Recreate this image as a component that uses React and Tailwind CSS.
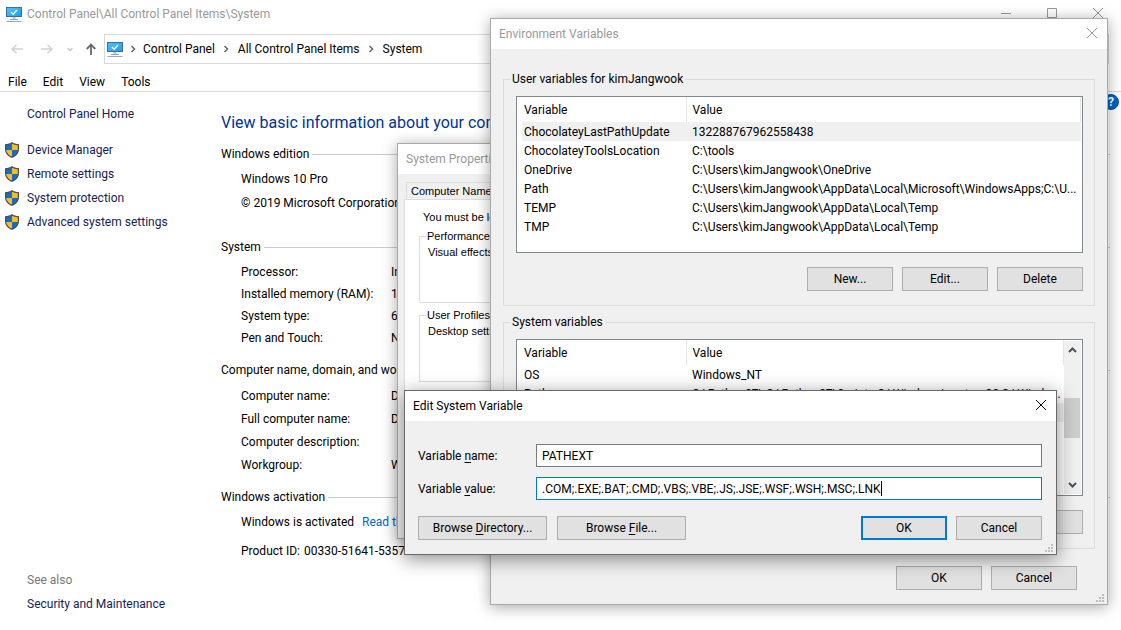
import React from "react";

function MonitorIcon() {
  return (
    <svg className="size-4 shrink-0" viewBox="0 0 16 16" aria-hidden="true">
      <defs>
        <linearGradient id="screen" x1="0" y1="0" x2="1" y2="1">
          <stop offset="0" stopColor="#4fc3fa" />
          <stop offset="1" stopColor="#1e9bf0" />
        </linearGradient>
      </defs>
      <rect x="0.5" y="1.5" width="15" height="9" fill="url(#screen)" stroke="#3f6f93" />
      <path d="M5 6l2.200 2.200L11 4" fill="none" stroke="#fff" strokeWidth="1.500" />
      <path d="M6.500 11h3v2h-3z" fill="#b9c6d0" />
      <path d="M4 13h8v1H4z" fill="#8ba6ba" />
      <path d="M0.500 15h15v1h-15z" fill="#93aabb" />
    </svg>
  );
}

function ShieldIcon() {
  return (
    <svg className="h-4 w-[14px] shrink-0" viewBox="0 0 14 16" aria-hidden="true">
      <path d="M7 0C5.300 1.400 2.800 2.200 0 2.200V7c0 4.200 2.800 7.200 7 9 4.200-1.800 7-4.800 7-9V2.200C11.200 2.200 8.700 1.400 7 0z" fill="#4a4a4a" />
      <path d="M7 1.600C5.400 2.700 3.400 3.200 1.200 3.300V8H7z" fill="#0f6fc6" />
      <path d="M7 1.600C8.600 2.700 10.600 3.200 12.800 3.300V8H7z" fill="#fdb92c" />
      <path d="M1.200 8C1.500 11 3.700 13.200 7 14.700V8z" fill="#fdb92c" />
      <path d="M12.800 8C12.500 11 10.300 13.200 7 14.700V8z" fill="#0f6fc6" />
    </svg>
  );
}

function Chevron() {
  return (
    <svg className="size-2 shrink-0" viewBox="0 0 8 8" aria-hidden="true">
      <path d="M2.500 1l3 3-3 3" fill="none" stroke="#666" strokeWidth="1.500" />
    </svg>
  );
}

function CloseGlyph() {
  return (
    <svg className="size-[10px]" viewBox="0 0 10 10" aria-hidden="true">
      <path d="M0 0l10 10M10 0L0 10" fill="none" stroke="currentColor" />
    </svg>
  );
}

function Grip() {
  return (
    <svg className="absolute bottom-[2px] right-[3px] size-2" viewBox="0 0 8 8" aria-hidden="true">
      <path
        d="M6 0h2v2H6zM3 3h2v2H3zM6 3h2v2H6zM0 6h2v2H0zM3 6h2v2H3zM6 6h2v2H6z"
        fill="#bfbfbf"
      />
    </svg>
  );
}

function Button({ children, wide, primary }) {
  return (
    <button
      type="button"
      className={
        "h-6 shrink-0 bg-[#e1e1e1] text-center leading-5 " +
        (wide ? "w-[129px] " : "w-[86px] ") +
        (primary ? "border-2 border-[#0078d7]" : "border border-[#adadad]")
      }
    >
      {children}
    </button>
  );
}

function TitleBar({ title, active }) {
  return (
    <header
      className={
        "flex h-[30px] items-center justify-between bg-white pl-2 " +
        (active ? "text-black" : "text-[#999]")
      }
    >
      <h2>{title}</h2>
      <button type="button" aria-label="Close" className="flex h-[28px] w-[30px] items-center justify-center self-start">
        <CloseGlyph />
      </button>
    </header>
  );
}

function Section({ title, className, children }) {
  return (
    <section className={"mr-[9px] " + className}>
      <div className="flex h-5 items-center gap-[3px]">
        <h2>{title}</h2>
        <span className="h-px flex-1 bg-[#ccc]" />
      </div>
      {children}
    </section>
  );
}

function Facts({ rows, rowClass }) {
  return (
    <dl className="pl-5 pt-1">
      {rows.map(([k, v]) => (
        <div key={k} className={"flex items-center " + rowClass}>
          <dt className="w-[150px] shrink-0">{k}</dt>
          <dd>{v}</dd>
        </div>
      ))}
    </dl>
  );
}

const TASKS = ["Device Manager", "Remote settings", "System protection", "Advanced system settings"];

function SystemWindow() {
  return (
    <div className="flex min-h-screen flex-col bg-white">
      <header className="flex h-7 items-center gap-[5px] pl-[6px] text-[#999]">
        <MonitorIcon />
        <span className="flex-1">Control Panel\All Control Panel Items\System</span>
        <div className="flex self-start">
          <button type="button" aria-label="Minimize" className="flex h-[26px] w-[46px] items-center justify-center">
            <svg className="size-[10px]" viewBox="0 0 10 10"><path d="M0 5h10v1H0z" fill="currentColor" /></svg>
          </button>
          <button type="button" aria-label="Maximize" className="flex h-[26px] w-[46px] items-center justify-center">
            <svg className="size-[10px]" viewBox="0 0 10 10"><path d="M.5.5h9v9h-9z" fill="none" stroke="currentColor" /></svg>
          </button>
          <button type="button" aria-label="Close" className="flex h-[26px] w-[46px] items-center justify-center">
            <CloseGlyph />
          </button>
        </div>
      </header>

      <nav className="mt-[6px] flex h-[30px] items-center pl-[11px] pr-3" aria-label="Address">
        <button type="button" aria-label="Back" className="w-[30px]">
          <svg className="h-[10px] w-3" viewBox="0 0 12 10"><path d="M12 5H1M5.500 .7L1.200 5l4.300 4.300" fill="none" stroke="#d2d2d2" strokeWidth="1.600" /></svg>
        </button>
        <button type="button" aria-label="Forward" className="w-[26px]">
          <svg className="h-[10px] w-3" viewBox="0 0 12 10"><path d="M0 5h11M6.500 .7L10.800 5 6.500 9.300" fill="none" stroke="#d2d2d2" strokeWidth="1.600" /></svg>
        </button>
        <button type="button" aria-label="Recent locations" className="w-[19px]">
          <svg className="h-[5px] w-[6px]" viewBox="0 0 6 5"><path d="M.5 1L3 3.500 5.500 1" fill="none" stroke="#c4c4c4" strokeWidth="1.400" /></svg>
        </button>
        <button type="button" aria-label="Up" className="w-[18px]">
          <svg className="h-3 w-[10px]" viewBox="0 0 10 12"><path d="M5 12V1.500M.7 6L5 1.600 9.300 6" fill="none" stroke="#6b6b6b" strokeWidth="1.800" /></svg>
        </button>
        <div className="flex h-full flex-1 items-center border border-[#d9d9d9] pl-[2px]">
          <MonitorIcon />
          <span className="flex w-5 justify-center"><Chevron /></span>
          <a href="#panel">Control Panel</a>
          <span className="flex w-[23px] justify-center"><Chevron /></span>
          <a href="#items">All Control Panel Items</a>
          <span className="flex w-[23px] justify-center"><Chevron /></span>
          <a href="#system">System</a>
        </div>
      </nav>

      <nav className="flex h-7 items-center gap-4 border-b border-[#d9d9d9] pl-2 pt-2" aria-label="Menu">
        <button type="button">File</button>
        <button type="button">Edit</button>
        <button type="button">View</button>
        <button type="button">Tools</button>
      </nav>

      <div className="flex flex-1">
        <aside className="flex w-[221px] shrink-0 flex-col pb-[14px] pt-[10px] text-[#151c55]">
          <a href="#home" className="pl-[27px] leading-6">Control Panel Home</a>
          <ul className="mt-3">
            {TASKS.map((t) => (
              <li key={t}>
                <a href="#task" className="flex h-6 items-center gap-2 pl-[5px]">
                  <ShieldIcon />
                  {t}
                </a>
              </li>
            ))}
          </ul>
          <p className="mt-auto pl-[27px] leading-6 text-[#777]">See also</p>
          <a href="#security" className="pl-[27px] leading-6">Security and Maintenance</a>
        </aside>

        <main className="flex-1 pr-[2px] pt-[2px]">
          <div className="flex h-10 items-start justify-between">
            <h1 className="pt-[17px] text-base leading-6 text-[#003399]">View basic information about your computer</h1>
            <button type="button" aria-label="Help" className="size-4 rounded-full border border-[#0a4f8f] bg-[#0063c6] text-center font-bold leading-[14px] text-white">
              ?
            </button>
          </div>
          <Section title="Windows edition" className="mt-[10px]">
            <div className="pl-5 pt-[3px] leading-6">
              <p>Windows 10 Pro</p>
              <p>© 2019 Microsoft Corporation. All rights</p>
            </div>
          </Section>
          <Section title="System" className="mt-[22px]">
            <Facts
              rowClass="h-[22px]"
              rows={[
                ["Processor:", "Intel"],
                ["Installed memory (RAM):", "16.0 GB"],
                ["System type:", "64-bit"],
                ["Pen and Touch:", "No Pen"],
              ]}
            />
          </Section>
          <Section title="Computer name, domain, and workgroup settings" className="mt-[11px]">
            <Facts
              rowClass="h-[23px]"
              rows={[
                ["Computer name:", "DESKTOP"],
                ["Full computer name:", "DESKTOP"],
                ["Computer description:", ""],
                ["Workgroup:", "WORKGROUP"],
              ]}
            />
          </Section>
          <Section title="Windows activation" className="mt-[11px]">
            <div className="pl-5 pt-px leading-[29px]">
              <p className="flex gap-2">
                Windows is activated
                <a href="#terms" className="text-[#0066cc]">Read the License</a>
              </p>
              <p className="flex gap-1">
                <span>Product ID:</span>
                <span>00330-51641-53576-AAOEM</span>
              </p>
            </div>
          </Section>
        </main>
      </div>
    </div>
  );
}

function PropertyGroup({ title, children }) {
  return (
    <fieldset className="border border-[#dcdcdc] pb-[42px] pl-2">
      <legend className="-ml-[2px] px-[1px] leading-[14px]">{title}</legend>
      <p className="mt-px leading-4">{children}</p>
    </fieldset>
  );
}

function SystemProperties() {
  return (
    <section className="absolute left-[397px] top-[143px] w-[410px] border border-[#aaa] bg-[#f0f0f0] shadow-[0_2px_14px_rgba(0,0,0,0.35)]">
      <TitleBar title="System Properties" />
      <div className="px-[6px] pb-[68px] pt-2 font-['Liberation_Sans',sans-serif] text-[11px]">
        <button type="button" className="ml-[2px] block h-[17px] border border-b-0 border-[#dcdcdc] px-1 leading-[14px]">
          Computer Name
        </button>
        <div className="flex flex-col gap-[5px] border border-[#dcdcdc] bg-white px-[14px] pb-2 pt-[9px]">
          <p className="-mb-px pl-1 leading-4">You must be logged on</p>
          <PropertyGroup title="Performance">Visual effects</PropertyGroup>
          <PropertyGroup title="User Profiles">Desktop settings</PropertyGroup>
          <PropertyGroup title="Startup and Recovery">System startup</PropertyGroup>
        </div>
      </div>
    </section>
  );
}

function VariableTable({ rows, selected }) {
  return (
    <table className="w-full table-fixed text-left">
      <thead>
        <tr className="h-[25px]">
          <th className="w-[164px] border-r border-[#e5e5e5] p-0 pl-[2px] font-normal">Variable</th>
          <th className="border-r border-[#e5e5e5] p-0 pl-[6px] font-normal">Value</th>
        </tr>
      </thead>
      <tbody>
        {rows.map(([k, v]) => (
          <tr key={k} className={"h-[19px] " + (k === selected ? "bg-[#f0f0f0]" : "")}>
            <td className="p-0 pl-[2px]">{k}</td>
            <td className="overflow-hidden p-0 pl-[6px]">{v}</td>
          </tr>
        ))}
      </tbody>
    </table>
  );
}

function VariableGroup({ title, rows, selected, scroll }) {
  return (
    <fieldset className="border border-[#dcdcdc] pb-[14px] pl-3 pr-[11px]">
      <legend className="-ml-[6px] px-[2px] leading-[18px]">{title}</legend>
      <div className="mt-2 flex h-[157px] border border-[#828790] bg-white pl-[5px] pr-px">
        <div className="min-w-0 flex-1">
          <VariableTable rows={rows} selected={selected} />
        </div>
        {scroll && (
          <div className="my-px flex w-[17px] flex-col items-center bg-[#f0f0f0] pr-px">
            <svg className="my-[6px] h-[6px] w-[9px]" viewBox="0 0 9 6"><path d="M1 5l3.500-3.500L8 5" fill="none" stroke="#505050" strokeWidth="2" /></svg>
            <span className="mt-[39px] h-10 w-full bg-[#cdcdcd]" />
            <svg className="mb-[6px] mt-auto h-[6px] w-[9px]" viewBox="0 0 9 6"><path d="M1 1l3.500 3.500L8 1" fill="none" stroke="#505050" strokeWidth="2" /></svg>
          </div>
        )}
      </div>
      <div className="mt-[14px] flex justify-end gap-[9px]">
        <Button>New...</Button>
        <Button>Edit...</Button>
        <Button>Delete</Button>
      </div>
    </fieldset>
  );
}

const USER_VARS = [
  ["ChocolateyLastPathUpdate", "132288767962558438"],
  ["ChocolateyToolsLocation", "C:\\tools"],
  ["OneDrive", "C:\\Users\\kimJangwook\\OneDrive"],
  ["Path", "C:\\Users\\kimJangwook\\AppData\\Local\\Microsoft\\WindowsApps;C:\\U..."],
  ["TEMP", "C:\\Users\\kimJangwook\\AppData\\Local\\Temp"],
  ["TMP", "C:\\Users\\kimJangwook\\AppData\\Local\\Temp"],
];

const SYSTEM_VARS = [
  ["OS", "Windows_NT"],
  ["Path", "C:\\Python27\\;C:\\Python27\\Scripts;C:\\Windows\\system32;C:\\Windo..."],
  ["PATHEXT", ".COM;.EXE;.BAT"],
];

function EnvironmentVariables() {
  return (
    <section className="absolute left-[490px] top-[18px] w-[618px] border border-[#aaa] bg-[#f0f0f0] shadow-[0_2px_14px_rgba(0,0,0,0.35)]">
      <TitleBar title="Environment Variables" />
      <div className="flex flex-col gap-[7px] px-3 pb-[14px] pt-[21px]">
        <VariableGroup title="User variables for kimJangwook" rows={USER_VARS} selected="ChocolateyLastPathUpdate" />
        <VariableGroup title="System variables" rows={SYSTEM_VARS} selected="PATHEXT" scroll />
        <div className="mt-[10px] flex justify-end gap-[9px] pr-[18px]">
          <Button>OK</Button>
          <Button>Cancel</Button>
        </div>
      </div>
      <Grip />
    </section>
  );
}

function EditVariable() {
  return (
    <section className="absolute left-[404px] top-[390px] w-[653px] border border-[#6a6a6a] bg-[#f0f0f0] shadow-[0_4px_18px_rgba(0,0,0,0.45)]">
      <TitleBar title="Edit System Variable" active />
      <form className="flex flex-col gap-[10px] pb-[14px] pl-[13px] pr-[14px] pt-[23px]">
        <div className="flex items-center">
          <label htmlFor="name" className="w-[118px]">Variable <u className="underline-offset-2">n</u>ame:</label>
          <input id="name" defaultValue="PATHEXT" className="h-[23px] min-w-0 flex-1 border border-[#7a7a7a] bg-white pl-[5px] outline-none" />
        </div>
        <div className="flex items-center">
          <label htmlFor="value" className="w-[118px]">Variable <u className="underline-offset-2">v</u>alue:</label>
          <div className="relative flex min-w-0 flex-1">
            <input
              id="value"
              defaultValue=".COM;.EXE;.BAT;.CMD;.VBS;.VBE;.JS;.JSE;.WSF;.WSH;.MSC;.LNK"
              className="h-[23px] min-w-0 flex-1 border border-[#0078d7] bg-white pl-[5px] outline-none"
            />
            <span className="absolute left-[345px] top-1 h-[15px] w-px bg-black" />
          </div>
        </div>
        <div className="mt-[6px] flex">
          <div className="flex flex-1 gap-[10px]">
            <Button wide>Browse <u className="underline-offset-2">D</u>irectory...</Button>
            <Button wide>Browse <u className="underline-offset-2">F</u>ile...</Button>
          </div>
          <div className="flex gap-[9px]">
            <Button primary>OK</Button>
            <Button>Cancel</Button>
          </div>
        </div>
      </form>
      <Grip />
    </section>
  );
}

export default function App() {
  return (
    <div className="relative min-h-screen overflow-hidden whitespace-nowrap font-['Roboto','Noto_Sans',sans-serif] text-[12px] leading-4 text-black">
      <SystemWindow />
      <SystemProperties />
      <EnvironmentVariables />
      <EditVariable />
    </div>
  );
}
